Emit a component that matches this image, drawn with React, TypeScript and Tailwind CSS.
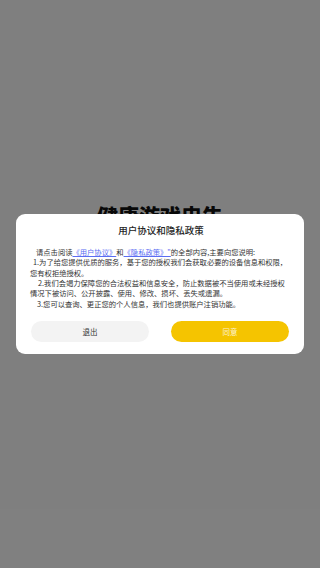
const App = () => {
  return (
    <div className="relative h-[568px] w-[320px] overflow-hidden bg-white" style={{ fontFamily: '"Noto Sans CJK SC", "Noto Sans", sans-serif' }}>
      <div className="pt-[201px] text-center text-[21px] font-black leading-[28px] text-[#111]">健康游戏忠告</div>

      <div className="absolute inset-0 flex items-center justify-center bg-black/50">
        <div className="w-[288px] rounded-[9px] bg-white pb-[12px] pl-[14px] pr-[12px] pt-[9px]">
          <h2 className="text-center text-[9.5px] font-medium leading-[14px] text-[#222]">用户协议和隐私政策</h2>
          <div className="mt-[10px] text-[7.3px] leading-[10.3px] text-[#333]">
            <p className="pl-[6px]">
              请点击阅读<span className="text-[#5a6df2] underline">《用户协议》</span>和<span className="text-[#5a6df2] underline">《隐私政策》"</span>的全部内容,主要向您说明:
            </p>
            <p className="indent-[3px]">1.为了给您提供优质的服务，基于您的授权我们会获取必要的设备信息和权限，您有权拒绝授权。</p>
            <p className="indent-[8px]">2.我们会竭力保障您的合法权益和信息安全，防止数据被不当使用或未经授权情况下被访问、公开披露、使用、修改、损坏、丢失或遗漏。</p>
            <p className="indent-[7px]">3.您可以查询、更正您的个人信息，我们也提供账户注销功能。</p>
          </div>
          <div className="mt-[12px] flex gap-[22px] pl-[1px] pr-[3px]">
            <button className="h-[21px] flex-1 rounded-full bg-[#f3f3f3] text-[7.5px] text-[#333]">退出</button>
            <button className="h-[21px] flex-1 rounded-full bg-[#f5c400] text-[7.5px] text-[#fdf3d0]">同意</button>
          </div>
        </div>
      </div>
    </div>
  );
};

export default App;
